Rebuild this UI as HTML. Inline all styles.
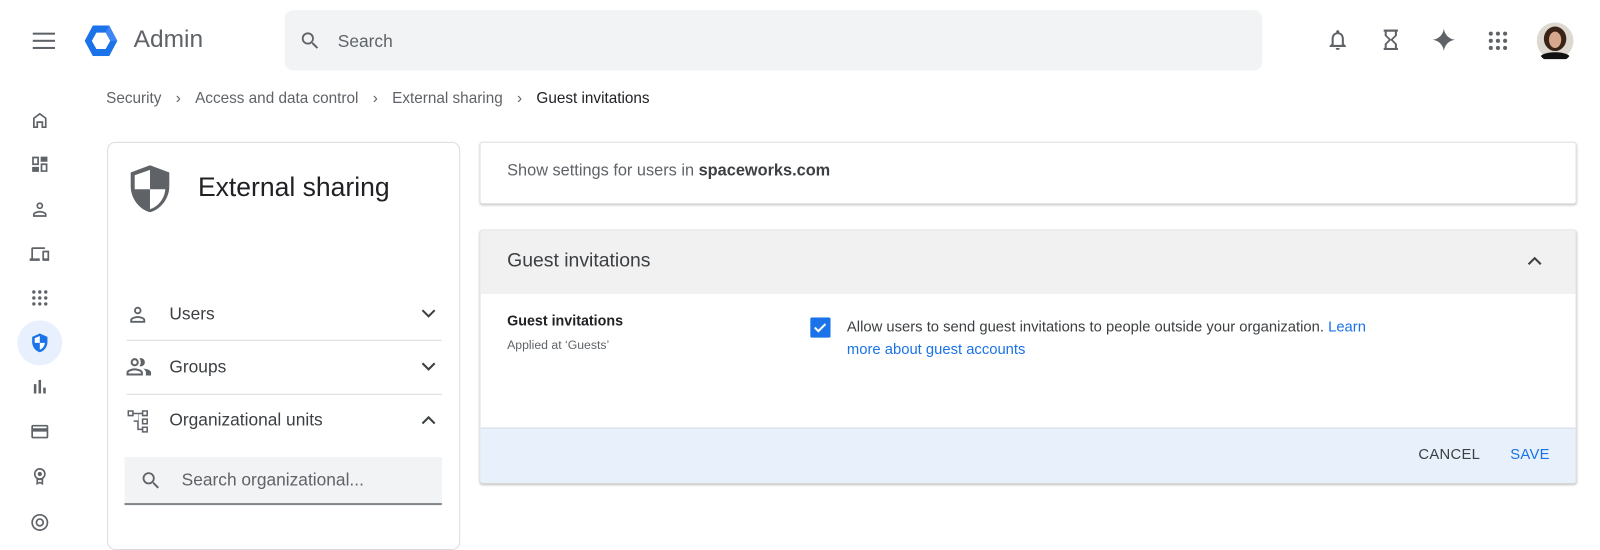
<!DOCTYPE html>
<html><head><meta charset="utf-8"><style>
*{box-sizing:border-box;margin:0;padding:0}
body{width:1600px;height:522px;overflow:hidden;background:#fff;font-family:"Liberation Sans",Arial,sans-serif;color:#3c4043;position:relative}
#w{position:absolute;left:0;top:0;width:1568px;height:512px;transform:scale(1.0204);transform-origin:0 0}
.a{position:absolute}
svg{display:block}
.ic{fill:#5f6368}
</style></head><body><div id="w">
<svg class="a" style="left:32px;top:30px" width="22" height="20"><rect y="2" width="22" height="2" fill="#5f6368"/><rect y="9" width="22" height="2" fill="#5f6368"/><rect y="16" width="22" height="2" fill="#5f6368"/></svg>
<svg class="a" style="left:83px;top:25px" width="32" height="30" viewBox="0 0 32 30"><polygon points="8,0 24,0 32,15 24,30 8,30 0,15" fill="#1a73e8"/><polygon points="16,15 24,0 32,15" fill="#4285f4"/><polygon points="11.5,7 20.5,7 25,15 20.5,23 11.5,23 7,15" fill="#fff"/></svg>
<div class="a" style="left:131px;top:25px;font-size:24px;color:#5f6368">Admin</div>
<div class="a" style="left:279px;top:10px;width:958px;height:59px;background:#f1f3f4;border-radius:8px"></div>
<svg class="a" style="left:293px;top:29px" width="22" height="22" viewBox="0 0 24 24"><path class="ic" d="M15.5 14h-.79l-.28-.27A6.470 6.470 0 0016 9.5 6.5 6.5 0 109.5 16c1.61 0 3.09-.59 4.230-1.57l.27.28v.79l5 4.99L20.49 19l-4.99-5zm-6 0C7.01 14 5 11.99 5 9.5S7.01 5 9.5 5 14 7.01 14 9.5 11.99 14 9.5 14z"/></svg>
<div class="a" style="left:331px;top:31px;font-size:17px;color:#5f6368">Search</div>
<svg class="a" style="left:1299px;top:27px" width="24" height="24" viewBox="0 0 24 24"><path class="ic" d="M12 22c1.1 0 2-.9 2-2h-4c0 1.1.9 2 2 2zm6-6v-5c0-3.07-1.64-5.64-4.5-6.32V4c0-.83-.67-1.5-1.5-1.5s-1.5.67-1.5 1.5v.68C7.63 5.36 6 7.92 6 11v5l-2 2v1h16v-1l-2-2zm-2 1H8v-6c0-2.48 1.51-4.5 4-4.5s4 2.02 4 4.5v6z"/></svg>
<svg class="a" style="left:1351px;top:27px" width="24" height="24" viewBox="0 0 24 24"><path class="ic" d="M6 2v6l4 4-4 4v6h12v-6l-4-4 4-4V2H6zm10 14.5V20H8v-3.5l4-4 4 4zM12 11.5l-4-4V4h8v3.5l-4 4z"/><rect x="5" y="2" width="14" height="2" fill="#5f6368"/><rect x="5" y="20" width="14" height="2" fill="#5f6368"/></svg>
<svg class="a" style="left:1403px;top:27px" width="24" height="24" viewBox="0 0 24 24"><path class="ic" d="M12 1C12.8 7 17 11.2 23 12 17 12.8 12.8 17 12 23 11.2 17 7 12.8 1 12 7 11.2 11.2 7 12 1z"/></svg>
<svg class="a" style="left:1456px;top:28px" width="24" height="24" viewBox="0 0 24 24"><g class="ic"><circle cx="5" cy="5" r="2"/><circle cx="12" cy="5" r="2"/><circle cx="19" cy="5" r="2"/><circle cx="5" cy="12" r="2"/><circle cx="12" cy="12" r="2"/><circle cx="19" cy="12" r="2"/><circle cx="5" cy="19" r="2"/><circle cx="12" cy="19" r="2"/><circle cx="19" cy="19" r="2"/></g></svg>
<svg class="a" style="left:1506px;top:22px" width="36" height="36" viewBox="0 0 36 36"><circle cx="18" cy="18" r="18" fill="#ddd8d0"/><ellipse cx="18" cy="16" rx="11" ry="12" fill="#3a2418"/><ellipse cx="18" cy="17" rx="6" ry="8" fill="#d9a88c"/><path d="M4 33c4-5 24-5 28 0a18 18 0 01-28 0z" fill="#111"/></svg>
<div class="a" style="left:104px;top:88px;font-size:15px;color:#5f6368;white-space:nowrap">Security<span style="margin:0 14px 0 14px">&#x203A;</span>Access and data control<span style="margin:0 14px">&#x203A;</span>External sharing<span style="margin:0 14px">&#x203A;</span><span style="color:#202124">Guest invitations</span></div>
<div class="a" style="left:17px;top:314px;width:44px;height:44px;border-radius:50%;background:#e8f0fe"></div>
<svg class="a" style="left:29px;top:108px" width="20" height="20" viewBox="0 0 24 24"><path class="ic" d="M12 3L4 9v12h6v-6h4v6h6V9l-8-6zm6 16h-2v-6H8v6H6v-9.030l6-4.5 6 4.5V19z"/></svg>
<svg class="a" style="left:29px;top:151px" width="20" height="20" viewBox="0 0 24 24"><path class="ic" d="M3 3h8v10H3zm2 2v6h4V5zM13 3h8v6h-8zM3 15h8v6H3zM13 11h8v10h-8zm2 2v6h4v-6z"/></svg>
<svg class="a" style="left:29px;top:195px" width="20" height="20" viewBox="0 0 24 24"><path class="ic" d="M12 12a4 4 0 100-8 4 4 0 000 8zm0-6a2 2 0 110 4 2 2 0 010-4zm0 8c-2.67 0-8 1.34-8 4v3h16v-3c0-2.66-5.33-4-8-4zm6 5H6v-1c.2-.72 3.3-2 6-2s5.8 1.28 6 2v1z"/></svg>
<svg class="a" style="left:29px;top:239px" width="20" height="20" viewBox="0 0 24 24"><path class="ic" d="M4 6h14V4H4a2 2 0 00-2 2v11H0v3h12v-3H4zm19 2h-7a1 1 0 00-1 1v10a1 1 0 001 1h7V8zm-2 9h-4v-7h4z"/></svg>
<svg class="a" style="left:29px;top:282px" width="20" height="20" viewBox="0 0 24 24"><g class="ic"><circle cx="5" cy="5" r="2"/><circle cx="12" cy="5" r="2"/><circle cx="19" cy="5" r="2"/><circle cx="5" cy="12" r="2"/><circle cx="12" cy="12" r="2"/><circle cx="19" cy="12" r="2"/><circle cx="5" cy="19" r="2"/><circle cx="12" cy="19" r="2"/><circle cx="19" cy="19" r="2"/></g></svg>
<svg class="a" style="left:29px;top:326px" width="20" height="20" viewBox="0 0 24 24"><path fill="#1a73e8" d="M12 1L3 5v6c0 5.55 3.84 10.74 9 12 5.16-1.26 9-6.45 9-12V5l-9-4z"/><path fill="#fff" d="M12 4v8H6V6.5zM12 12h6c-.5 4-3 7-6 8z"/></svg>
<svg class="a" style="left:29px;top:369px" width="20" height="20" viewBox="0 0 24 24"><path class="ic" d="M5 9h3v11H5zm5.5-5h3v16h-3zm5.5 9h3v7h-3z"/></svg>
<svg class="a" style="left:29px;top:413px" width="20" height="20" viewBox="0 0 24 24"><path class="ic" d="M20 4H4c-1.11 0-2 .89-2 2v12c0 1.11.89 2 2 2h16c1.11 0 2-.89 2-2V6c0-1.11-.89-2-2-2zm0 14H4v-6h16v6zm0-10H4V6h16v2z"/></svg>
<svg class="a" style="left:29px;top:457px" width="20" height="20" viewBox="0 0 24 24"><path class="ic" d="M12 2a7 7 0 00-4 12.74V22l4-2 4 2v-7.26A7 7 0 0012 2zm0 2a5 5 0 110 10 5 5 0 010-10zm0 2.5a2.5 2.5 0 100 5 2.5 2.5 0 000-5zM10 16a7 7 0 004 0v3l-2-1-2 1z"/></svg>
<svg class="a" style="left:29px;top:502px" width="20" height="20" viewBox="0 0 24 24"><path class="ic" d="M12 2a10 10 0 100 20 10 10 0 000-20zm0 2a8 8 0 110 16 8 8 0 010-16zm0 3a5 5 0 100 10 5 5 0 000-10zm0 2a3 3 0 110 6 3 3 0 010-6z"/></svg>
<div class="a" style="left:105px;top:139px;width:346px;height:400px;border:1px solid #dadce0;border-radius:8px;background:#fff"></div>
<svg class="a" style="left:128px;top:162px" width="38" height="46" viewBox="0 0 38 46"><path fill="#5f6368" d="M19 0L0 7v13c0 12 8 23 19 26 11-3 19-14 19-26V7z"/><path fill="#fff" d="M19 4.5v19H4V9.8zM19 23.5h15c-.8 9.5-7 17-15 19.5z"/></svg>
<div class="a" style="left:194px;top:168px;font-size:26px;color:#202124">External sharing</div>
<svg class="a" style="left:124px;top:297px" width="22" height="22" viewBox="0 0 24 24"><path class="ic" d="M12 12a4 4 0 100-8 4 4 0 000 8zm0-6a2 2 0 110 4 2 2 0 010-4zm0 8c-2.67 0-8 1.34-8 4v3h16v-3c0-2.66-5.33-4-8-4zm6 5H6v-1c.2-.72 3.3-2 6-2s5.8 1.28 6 2v1z"/></svg>
<div class="a" style="left:166px;top:298px;font-size:17px;color:#3c4043">Users</div>
<svg class="a" style="left:123px;top:349px" width="26" height="22" viewBox="0 0 26 22"><path class="ic" d="M9 10a4 4 0 100-8 4 4 0 000 8zm0-6a2 2 0 110 4 2 2 0 010-4zm0 8c-2.7 0-8 1.3-8 4v3h16v-3c0-2.7-5.3-4-8-4zm6 5H3v-1c.2-.7 3.3-2 6-2s5.8 1.3 6 2zM15 10a4 4 0 000-8c-.5 0-1 .1-1.4.2a6 6 0 010 7.6c.4.1.9.2 1.4.2zm2.4 2.3c1.4 1 2.6 2.2 2.6 3.7v3h5v-3c0-2.3-4-3.5-7.6-3.7z"/></svg>
<div class="a" style="left:166px;top:350px;font-size:17px;color:#3c4043">Groups</div>
<svg class="a" style="left:124px;top:401px" width="24" height="24" viewBox="0 0 24 24"><path class="ic" d="M1 1h6v6H1zm1.5 1.5v3h3v-3zM15 1h6v6h-6zm1.5 1.5v3h3v-3zM15 9h6v6h-6zm1.5 1.5v3h3v-3zM15 17h6v6h-6zm1.5 1.5v3h3v-3zM7 3.5h8V5h-3v14h3v1.5h-4.5v-8H7V11h4.5V5H7z"/></svg>
<div class="a" style="left:166px;top:402px;font-size:17px;color:#3c4043">Organizational units</div>
<svg class="a" style="left:412px;top:300px" width="16" height="14" viewBox="0 0 16 14"><path d="M2 4l6 6 6-6" stroke="#3c4043" stroke-width="2" fill="none"/></svg>
<svg class="a" style="left:412px;top:352px" width="16" height="14" viewBox="0 0 16 14"><path d="M2 4l6 6 6-6" stroke="#3c4043" stroke-width="2" fill="none"/></svg>
<svg class="a" style="left:412px;top:405px" width="16" height="14" viewBox="0 0 16 14"><path d="M2 10l6-6 6 6" stroke="#3c4043" stroke-width="2" fill="none"/></svg>
<div class="a" style="left:124px;top:333px;width:309px;height:1px;background:#dadce0"></div>
<div class="a" style="left:124px;top:386px;width:309px;height:1px;background:#dadce0"></div>
<div class="a" style="left:122px;top:448px;width:311px;height:47px;background:#f1f3f4;border-bottom:2px solid #80868b"></div>
<svg class="a" style="left:137px;top:460px" width="22" height="22" viewBox="0 0 24 24"><path class="ic" d="M15.5 14h-.79l-.28-.27A6.470 6.470 0 0016 9.5 6.5 6.5 0 109.5 16c1.61 0 3.09-.59 4.230-1.57l.27.28v.79l5 4.99L20.49 19l-4.99-5zm-6 0C7.01 14 5 11.99 5 9.5S7.01 5 9.5 5 14 7.01 14 9.5 11.99 14 9.5 14z"/></svg>
<div class="a" style="left:178px;top:461px;font-size:17px;color:#5f6368">Search organizational...</div>
<div class="a" style="left:470px;top:139px;width:1075px;height:61px;background:#fff;border:1px solid #e3e3e3;border-radius:3px;box-shadow:0 1px 2px rgba(0,0,0,.2)"></div>
<div class="a" style="left:497px;top:159px;font-size:16px;color:#5f6368">Show settings for users in <b style="color:#3c4043">spaceworks.com</b></div>
<div class="a" style="left:470px;top:225px;width:1075px;height:249px;background:#fff;border:1px solid #e3e3e3;border-radius:3px;box-shadow:0 1px 2px rgba(0,0,0,.25);overflow:hidden">
 <div style="height:62px;background:#f1f1f2"></div>
 <div style="position:absolute;left:0;top:193px;width:100%;height:56px;background:#e7f0fb;border-top:1px solid #d6dce4"></div>
</div>
<div class="a" style="left:497px;top:245px;font-size:19px;color:#3c4043">Guest invitations</div>
<svg class="a" style="left:1496px;top:249px" width="16" height="14" viewBox="0 0 16 14"><path d="M2 10l6-6 6 6" stroke="#3c4043" stroke-width="2" fill="none"/></svg>
<div class="a" style="left:497px;top:306px;font-size:14px;font-weight:bold;color:#202124">Guest invitations</div>
<div class="a" style="left:497px;top:331px;font-size:12px;color:#5f6368">Applied at ‘Guests’</div>
<svg class="a" style="left:794px;top:311px" width="20" height="20" viewBox="0 0 20 20"><rect width="20" height="20" rx="2" fill="#1a73e8"/><path d="M4.5 10l3.5 3.5 7-7" stroke="#fff" stroke-width="2" fill="none"/></svg>
<div class="a" style="left:830px;top:310px;font-size:14.5px;line-height:22px;color:#3c4043;width:525px">Allow users to send guest invitations to people outside your organization. <span style="color:#1a73e8">Learn more about guest accounts</span></div>
<div class="a" style="left:1390px;top:438px;font-size:14.5px;font-weight:500;color:#3c4043;letter-spacing:.3px">CANCEL</div>
<div class="a" style="left:1480px;top:438px;font-size:14.5px;font-weight:500;color:#1a73e8;letter-spacing:.3px">SAVE</div>
</div></body></html>
